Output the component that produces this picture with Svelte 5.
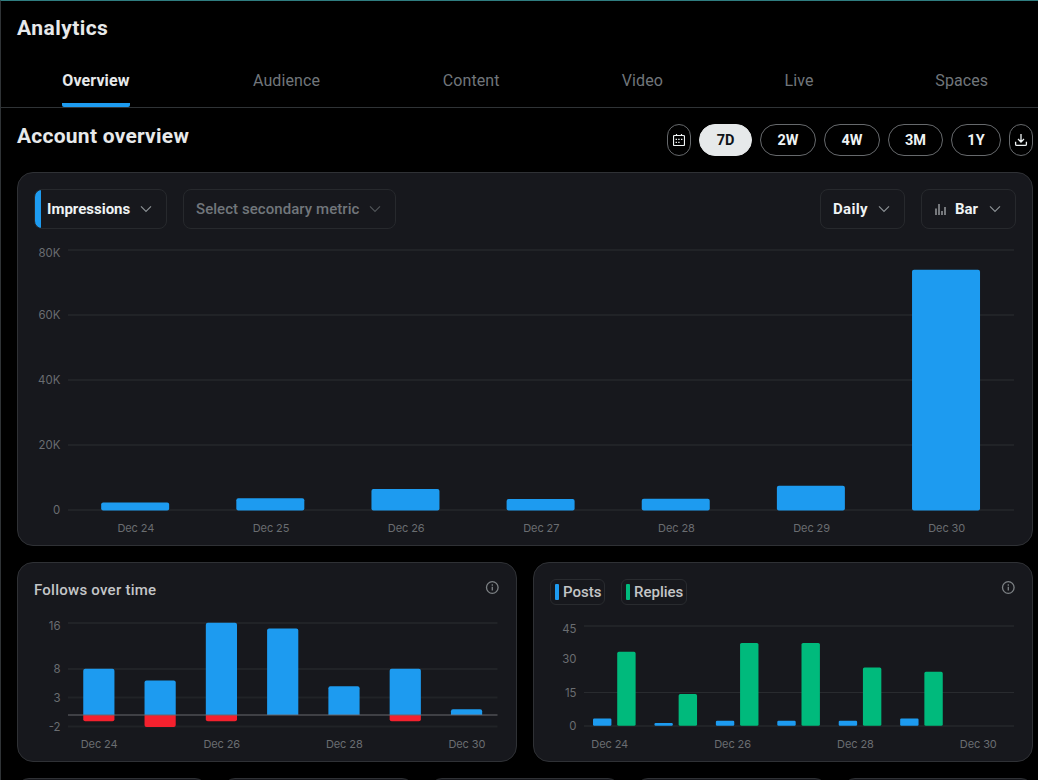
<script>
    const tabs = ["Overview", "Audience", "Content", "Video", "Live", "Spaces"];
    const ranges = [
        { label: "7D", size: "w53", active: true },
        { label: "2W", size: "w56" },
        { label: "4W", size: "w56" },
        { label: "3M", size: "w55" },
        { label: "1Y", size: "w50" }
    ];
    const days = ["Dec 24", "Dec 25", "Dec 26", "Dec 27", "Dec 28", "Dec 29", "Dec 30"];
    const stubs = [1, 2, 3, 4, 5];

    const impressions = [2300, 3600, 6500, 3400, 3500, 7500, 73900];
    const follows = [8, 6, 16, 15, 5, 8, 1];
    const unfollows = [1, 2, 1, 0, 0, 1, 0];
    const posts = [3, 1, 2, 2, 2, 3, 0];
    const replies = [33, 14, 37, 37, 26, 24, 0];

    const main = { left: 50, band: 946 / 7, zero: 281, unit: 260 / 80000 };
    const small = { left: 50, band: 429 / 7, zero: 109, unit: 5.77 };
    const pair = { left: 50, band: 430 / 7, zero: 119.2, unit: 2.223 };

    const mainTicks = [
        { label: "80K", y: 21, text: 28 },
        { label: "60K", y: 86, text: 90 },
        { label: "40K", y: 151, text: 155 },
        { label: "20K", y: 216, text: 220 },
        { label: "0", y: 281, text: 285 }
    ];
    const followTicks = [
        { label: "16", y: 17, text: 24 },
        { label: "8", y: 63, text: 67 },
        { label: "3", y: 91.5, text: 96 },
        { label: "-2", y: 120.5, text: 125 }
    ];
    const postTicks = [
        { label: "45", y: 20, text: 27 },
        { label: "30", y: null, text: 57 },
        { label: "15", y: 86.5, text: 91 },
        { label: "0", y: 120, text: 124 }
    ];

    const center = (c, i) => c.left + c.band * (i + 0.5);
</script>

<div class="page">
    <header>
        <h1>Analytics</h1>
        <nav>
            {#each tabs as tab, i}
                <div class="tab" class:selected={i === 0}><span>{tab}</span></div>
            {/each}
        </nav>
    </header>

    <main>
        <div class="title-row">
            <h2>Account overview</h2>
            <div class="ranges">
                <button class="pill w24" aria-label="Pick dates">
                    <svg width="12" height="12" viewBox="0 0 12 12" fill="none" stroke="#eff3f4">
                        <path d="M1.5 1.5h9q1 0 1 1v8q0 1-1 1h-9q-1 0-1-1v-8q0-1 1-1z" stroke-width="1.2" />
                        <path d="M3.5 0v2M8.5 0v2" stroke-width="1.2" />
                        <path d="M5.2 5.3h1.4M8 5.3h1.4M2.6 5.3H4M2.6 8.3H4M5.2 8.3h1.4" stroke-width="1.2" />
                    </svg>
                </button>
                {#each ranges as range}
                    <button class="pill {range.size}" class:active={range.active}>{range.label}</button>
                {/each}
                <button class="pill w24" aria-label="Download">
                    <svg width="14" height="14" viewBox="0 0 14 14" fill="none" stroke="#eff3f4" stroke-width="1.3">
                        <path d="M7 1v8M4 6l3 3 3-3M1.6 8.8v2.4q0 1.2 1.2 1.2h8.4q1.2 0 1.2-1.2V8.8" />
                    </svg>
                </button>
            </div>
        </div>

        <section class="card overview">
            <div class="controls">
                <div class="select metric">
                    <span>Impressions</span>
                    <svg class="chevron" width="12" height="8" viewBox="0 0 12 8"><path d="M1 1.3l5 5 5-5" /></svg>
                </div>
                <div class="select secondary">
                    <span>Select secondary metric</span>
                    <svg class="chevron" width="12" height="8" viewBox="0 0 12 8"><path d="M1 1.3l5 5 5-5" /></svg>
                </div>
                <div class="select daily">
                    <span>Daily</span>
                    <svg class="chevron" width="12" height="8" viewBox="0 0 12 8"><path d="M1 1.3l5 5 5-5" /></svg>
                </div>
                <div class="select kind">
                    <svg class="bars" width="11" height="12" viewBox="0 0 11 12"><path d="M1 5.5V12M4 1v11M7 8v4M10 4v8" /></svg>
                    <span>Bar</span>
                    <svg class="chevron" width="12" height="8" viewBox="0 0 12 8"><path d="M1 1.3l5 5 5-5" /></svg>
                </div>
            </div>
            <svg class="chart" width="1014" height="316">
                {#each mainTicks as tick}
                    <line class="grid" x1="50" x2="996" y1={tick.y} y2={tick.y} />
                    <text class="tick" x="42.3" y={tick.text} text-anchor="end">{tick.label}</text>
                {/each}
                {#each impressions as value, i}
                    <rect class="blue" x={center(main, i) - 34.4} y={main.zero - value * main.unit} width="68" height={value * main.unit + 0.5} rx="2" />
                    <text x={center(main, i) + 0.3} y="303" text-anchor="middle">{days[i]}</text>
                {/each}
            </svg>
        </section>

        <div class="row">
            <section class="card half">
                <div class="half-head">
                    <h3>Follows over time</h3>
                    <svg class="info" width="14" height="14" viewBox="0 0 14 14"><circle cx="7.3" cy="6.5" r="5.8" /><path d="M7.3 5.7v3.9M7.3 3.2v1.5" /></svg>
                </div>
                <svg class="chart" width="498" height="154">
                    {#each followTicks as tick}
                        <line class="grid" x1="50" x2="479.5" y1={tick.y} y2={tick.y} />
                        <text class="tick" x="42.5" y={tick.text} text-anchor="end">{tick.label}</text>
                    {/each}
                    {#each follows as value, i}
                        <path class="blue" d="M{center(small, i) - 15.4} {small.zero}v{2 - value * small.unit}q0-2 2-2h27.2q2 0 2 2v{value * small.unit - 2}z" />
                        {#if unfollows[i]}
                            <path class="red" d="M{center(small, i) - 15.4} {small.zero}v{unfollows[i] * small.unit - 1.6}q0 2 2 2h27.2q2 0 2-2v{1.6 - unfollows[i] * small.unit}z" />
                        {/if}
                        {#if i % 2 === 0}
                            <text x={center(small, i) + 0.5} y="142" text-anchor="middle">{days[i]}</text>
                        {/if}
                    {/each}
                    <line class="zero" x1="50" x2="479.5" y1="109" y2="109" />
                </svg>
            </section>

            <section class="card half">
                <div class="half-head">
                    <div class="legend">
                        <div class="key"><i class="posts"></i><span>Posts</span></div>
                        <div class="key replies-key"><i class="replies"></i><span>Replies</span></div>
                    </div>
                    <svg class="info" width="14" height="14" viewBox="0 0 14 14"><circle cx="7.3" cy="6.5" r="5.8" /><path d="M7.3 5.7v3.9M7.3 3.2v1.5" /></svg>
                </div>
                <svg class="chart" width="498" height="154">
                    {#each postTicks as tick}
                        {#if tick.y !== null}
                            <line class="grid" class:thin={tick.label === "15"} x1="50" x2="480" y1={tick.y} y2={tick.y} />
                        {/if}
                        <text class="tick" x="42.5" y={tick.text} text-anchor="end">{tick.label}</text>
                    {/each}
                    {#each posts as value, i}
                        {#if value}
                            <rect class="blue" x={center(pair, i) - 21.7} y={pair.zero - value * pair.unit} width="18.4" height={value * pair.unit + 0.6} rx="1.2" />
                            <rect class="green" x={center(pair, i) + 2.5} y={pair.zero - replies[i] * pair.unit} width="18.4" height={replies[i] * pair.unit + 0.6} rx="1.6" />
                        {/if}
                        {#if i % 2 === 0}
                            <text x={center(pair, i) - 5} y="142" text-anchor="middle">{days[i]}</text>
                        {/if}
                    {/each}
                </svg>
            </section>
        </div>

        <div class="stubs">
            {#each stubs as stub (stub)}
                <section class="card stub"></section>
            {/each}
        </div>
    </main>
</div>

<style>
    :global(body) {
        background: #000;
        overflow: hidden;
    }

    .page {
        box-sizing: border-box;
        width: 1038px;
        height: 780px;
        overflow: hidden;
        background: #000;
        color: #e7e9ea;
        border-top: 1px solid #2f7d80;
        border-left: 1px solid #2f3336;
        font-family: Roboto, "Liberation Sans", sans-serif;
    }

    header {
        height: 106px;
        border-bottom: 1px solid #2f3336;
    }

    h1, h2, h3 {
        margin: 0;
    }

    h1 {
        height: 53px;
        padding-left: 16px;
        font-size: 21px;
        line-height: 54px;
        font-weight: 700;
        letter-spacing: 0.45px;
    }

    nav {
        display: grid;
        grid-template-columns: 190.7px 189.7px 179.7px 162.7px 150.7px 174.7px;
        height: 53px;
    }

    .tab {
        display: flex;
        justify-content: center;
        color: #71767b;
        font-size: 16px;
        line-height: 54px;
        font-weight: 400;
        letter-spacing: 0.1px;
    }

    .selected {
        color: #e7e9ea;
        font-weight: 700;
    }

    .selected span {
        box-sizing: border-box;
        width: 68px;
        height: 53px;
        background: linear-gradient(#1d9bf0, #1d9bf0) bottom / 100% 4px no-repeat;
        border-radius: 2px;
        white-space: nowrap;
    }

    main {
        padding: 0 5px 0 16px;
    }

    .title-row {
        display: flex;
        justify-content: space-between;
        height: 64px;
    }

    h2 {
        font-size: 21px;
        line-height: 56px;
        font-weight: 700;
        letter-spacing: 0.25px;
    }

    .ranges {
        display: flex;
        gap: 8px;
        padding-top: 16px;
    }

    .pill {
        display: flex;
        align-items: center;
        justify-content: center;
        box-sizing: border-box;
        height: 32px;
        padding: 0;
        background: #000;
        border: 1px solid #66696c;
        border-radius: 16px;
        color: #eff3f4;
        font: 700 14.5px Roboto, "Liberation Sans", sans-serif;
    }

    .active {
        background: #e6e9ea;
        border-color: #e6e9ea;
        color: #0f1419;
    }

    .w24 { width: 24px; }
    .w50 { width: 50px; }
    .w53 { width: 53px; }
    .w55 { width: 55px; }
    .w56 { width: 56px; }

    .card {
        box-sizing: border-box;
        background: #17181d;
        border: 1px solid #2f3135;
        border-radius: 16px;
    }

    .overview {
        height: 374px;
        overflow: hidden;
    }

    .controls {
        display: flex;
        gap: 16px;
        height: 56px;
        padding: 16px 16px 0;
        box-sizing: border-box;
    }

    .select {
        display: flex;
        align-items: center;
        box-sizing: border-box;
        height: 40px;
        padding: 0 14px 0 12px;
        justify-content: space-between;
        border: 1px solid #27292d;
        border-radius: 8px;
        color: #eff3f4;
        font-size: 15px;
        font-weight: 700;
        white-space: nowrap;
    }

    .metric {
        width: 133px;
        background: linear-gradient(#1d9bf0, #1d9bf0) left / 6px 100% no-repeat;
    }

    .secondary {
        width: 213px;
        color: #71767b;
        font-weight: 500;
        letter-spacing: 0.06px;
    }

    .secondary .chevron {
        stroke: #505458;
    }

    .daily {
        width: 85px;
        margin-left: auto;
        letter-spacing: 0.3px;
    }

    .kind {
        width: 95px;
        padding-left: 13px;
    }

    .kind span {
        margin-right: 2px;
    }

    .chevron {
        fill: none;
        stroke: #8b9094;
        stroke-width: 1.2;
    }

    .bars {
        stroke: #a9adb0;
        stroke-width: 1.3;
    }

    .chart {
        display: block;
    }

    .chart text {
        fill: #6a6d71;
        font: 11px Inter, sans-serif;
        letter-spacing: -0.1px;
    }

    .chart .tick {
        font-size: 11.4px;
        letter-spacing: 0;
    }

    .grid {
        stroke: #212327;
        stroke-width: 2;
    }

    .thin {
        stroke: #292b2f;
        stroke-width: 1;
    }

    .zero {
        stroke: #67686e;
        stroke-opacity: 0.5;
        stroke-width: 2;
    }

    .blue { fill: #1d9bf0; }
    .red { fill: #f4212e; }
    .green { fill: #00ba7c; }

    .row {
        display: flex;
        gap: 16px;
        margin-top: 16px;
    }

    .half {
        width: 500px;
        height: 200px;
        overflow: hidden;
    }

    .half-head {
        display: flex;
        justify-content: space-between;
        box-sizing: border-box;
        height: 43px;
        padding: 16px 17px 0 16px;
    }

    h3 {
        color: #c4c6c8;
        font-size: 15px;
        line-height: 22px;
        font-weight: 500;
        letter-spacing: 0.25px;
    }

    .info {
        margin-top: 2px;
        fill: none;
        stroke: #7c8084;
        stroke-width: 1.3;
    }

    .legend {
        display: flex;
        gap: 16px;
    }

    .key {
        display: flex;
        align-items: center;
        box-sizing: border-box;
        width: 55px;
        height: 26px;
        padding-left: 4px;
        gap: 4px;
        border: 1px solid #292b2f;
        border-radius: 6px;
        color: #c4c6c8;
        font-size: 15px;
        font-weight: 500;
    }

    .replies-key {
        width: 66px;
    }

    .key i {
        width: 4px;
        height: 16px;
        border-radius: 1px;
    }

    .posts { background: #1d9bf0; }
    .replies { background: #00ba7c; }

    .stubs {
        display: grid;
        grid-template-columns: repeat(5, 1fr);
        gap: 16px;
        margin-top: 16px;
    }

    .stub {
        height: 100px;
        border-radius: 12px;
    }
</style>
